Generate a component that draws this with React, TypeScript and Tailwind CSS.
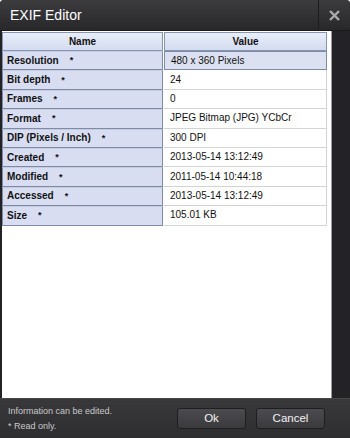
const rows = [
  { name: "Resolution", value: "480 x 360 Pixels", selected: true },
  { name: "Bit depth", value: "24" },
  { name: "Frames", value: "0" },
  { name: "Format", value: "JPEG Bitmap (JPG) YCbCr" },
  { name: "DIP (Pixels / Inch)", value: "300 DPI" },
  { name: "Created", value: "2013-05-14 13:12:49" },
  { name: "Modified", value: "2011-05-14 10:44:18" },
  { name: "Accessed", value: "2013-05-14 13:12:49" },
  { name: "Size", value: "105.01 KB" },
];

const App = () => {
  return (
    <div
      className="w-[350px] h-[438px] bg-[#232327] flex flex-col overflow-hidden rounded-t-[4px]"
      style={{ fontFamily: "'Liberation Sans', Arial, sans-serif" }}
    >
      {/* Title bar */}
      <div className="h-[31px] flex items-stretch bg-gradient-to-b from-[#3c3c3f] to-[#28282b] border-b border-[#1a1a1c]">
        <div className="flex-1 flex items-center pl-[10px] text-[14px] text-white">
          EXIF Editor
        </div>
        <div className="w-[32px] flex items-center justify-center border-l border-[#1c1c1e]">
          <svg className="w-[11px] h-[11px]" viewBox="0 0 12 12">
            <path d="M2 2L10 10M10 2L2 10" stroke="#a9a9ad" strokeWidth={2.6} strokeLinecap="square" />
          </svg>
        </div>
      </div>

      {/* Content */}
      <div className="flex-1 flex">
        <div className="w-[2px]" />
        <div className="w-[329px] bg-white pt-[1px] pr-[4px]">
          <div className="grid grid-cols-[161px_163px] gap-x-[1px] text-[10px] leading-none">
            <div className="h-[19px] flex items-center justify-center font-bold text-[#111] bg-gradient-to-b from-[#e9eef9] to-[#d3dcef] border border-[#8795ae]">
              Name
            </div>
            <div className="h-[19px] flex items-center justify-center font-bold text-[#111] bg-gradient-to-b from-[#e9eef9] to-[#d3dcef] border border-[#8795ae]">
              Value
            </div>
            {rows.map((r) => (
              <>
                <div
                  key={r.name + "n"}
                  className="h-[19.4px] flex items-center pl-[4px] font-bold text-[#111] bg-[#d8ddf1] border border-[#7e8aa6] border-t-[#c4cce0]"
                >
                  {r.name}
                  <span className="ml-[11px] text-[9px]">*</span>
                </div>
                <div
                  key={r.name + "v"}
                  className={
                    r.selected
                      ? "h-[19.4px] flex items-center pl-[6px] text-[#111] bg-[#dce1f2] border border-[#7e8aa6]"
                      : "h-[19.4px] flex items-center pl-[6px] text-[#111] bg-white border-b border-r border-[#d4d4d4]"
                  }
                >
                  {r.value}
                </div>
              </>
            ))}
          </div>
        </div>
        <div className="flex-1 border-l border-[#9a9a9a]" />
      </div>

      {/* Footer */}
      <div className="h-[40px] flex items-center bg-gradient-to-b from-[#38383b] to-[#2e2e31] border-t border-[#48484b] pl-[8px] pr-[25px]">
        <div className="flex-1 flex flex-col text-[9px] leading-[15px] text-[#c9c9c9]">
          <span>Information can be edited.</span>
          <span>* Read only.</span>
        </div>
        <button className="w-[69px] h-[21px] rounded-[3px] bg-gradient-to-b from-[#4c4c50] to-[#3a3a3d] border border-[#1e1e20] text-[11.5px] text-[#f2f2f2] mr-[10px]">
          Ok
        </button>
        <button className="w-[69px] h-[21px] rounded-[3px] bg-gradient-to-b from-[#4c4c50] to-[#3a3a3d] border border-[#1e1e20] text-[11.5px] text-[#f2f2f2]">
          Cancel
        </button>
      </div>
    </div>
  );
};

export default App;
